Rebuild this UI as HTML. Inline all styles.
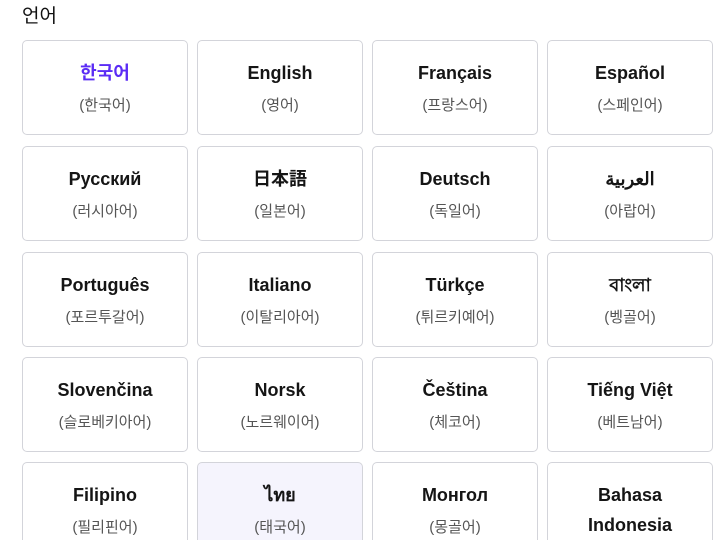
<!DOCTYPE html>
<html style="width:720px;height:540px;overflow:hidden"><head><meta charset="utf-8"><style>
*{box-sizing:border-box;margin:0;padding:0}
body{width:720px;height:540px;overflow:hidden;background:#fff;font-family:"Liberation Sans","Noto Sans CJK KR",sans-serif;position:relative}
h1{position:absolute;left:22px;top:3px;font-size:19px;font-weight:400;color:#111;font-family:"Noto Sans CJK KR",sans-serif;line-height:24px}
.c{position:absolute;width:166px;height:95px;border:1.5px solid #d3d4da;border-radius:5px;background:#fff;text-align:center;padding-top:17px;overflow:hidden}
.t{font-size:18px;font-weight:700;color:#151515;line-height:30px;font-family:"Liberation Sans","Noto Sans CJK KR","Noto Sans CJK JP",sans-serif}
.s{font-size:15px;color:#555;line-height:30px;margin-top:3px;font-family:"Liberation Sans","Noto Sans CJK KR",sans-serif}
.l{height:78px;border-bottom:none;border-radius:5px 5px 0 0}
</style></head><body>
<h1>언어</h1>
<div class="c" style="left:22px;top:40px"><div class="t" style="color:#5b2cf5">한국어</div><div class="s">(한국어)</div></div>
<div class="c" style="left:197px;top:40px"><div class="t">English</div><div class="s">(영어)</div></div>
<div class="c" style="left:372px;top:40px"><div class="t">Français</div><div class="s">(프랑스어)</div></div>
<div class="c" style="left:547px;top:40px"><div class="t">Español</div><div class="s">(스페인어)</div></div>

<div class="c" style="left:22px;top:146px"><div class="t">Русский</div><div class="s">(러시아어)</div></div>
<div class="c" style="left:197px;top:146px"><div class="t">日本語</div><div class="s">(일본어)</div></div>
<div class="c" style="left:372px;top:146px"><div class="t">Deutsch</div><div class="s">(독일어)</div></div>
<div class="c" style="left:547px;top:146px"><div class="t">العربية</div><div class="s">(아랍어)</div></div>

<div class="c" style="left:22px;top:252px"><div class="t">Português</div><div class="s">(포르투갈어)</div></div>
<div class="c" style="left:197px;top:252px"><div class="t">Italiano</div><div class="s">(이탈리아어)</div></div>
<div class="c" style="left:372px;top:252px"><div class="t">Türkçe</div><div class="s">(튀르키예어)</div></div>
<div class="c" style="left:547px;top:252px"><div class="t">বাংলা</div><div class="s">(벵골어)</div></div>

<div class="c" style="left:22px;top:357px"><div class="t">Slovenčina</div><div class="s">(슬로베키아어)</div></div>
<div class="c" style="left:197px;top:357px"><div class="t">Norsk</div><div class="s">(노르웨이어)</div></div>
<div class="c" style="left:372px;top:357px"><div class="t">Čeština</div><div class="s">(체코어)</div></div>
<div class="c" style="left:547px;top:357px"><div class="t">Tiếng Việt</div><div class="s">(베트남어)</div></div>

<div class="c l" style="left:22px;top:462px"><div class="t">Filipino</div><div class="s">(필리핀어)</div></div>
<div class="c l" style="left:197px;top:462px;background:#f5f4fd"><div class="t">ไทย</div><div class="s">(태국어)</div></div>
<div class="c l" style="left:372px;top:462px"><div class="t">Монгол</div><div class="s">(몽골어)</div></div>
<div class="c l" style="left:547px;top:462px"><div class="t">Bahasa<br>Indonesia</div></div>
</body></html>
